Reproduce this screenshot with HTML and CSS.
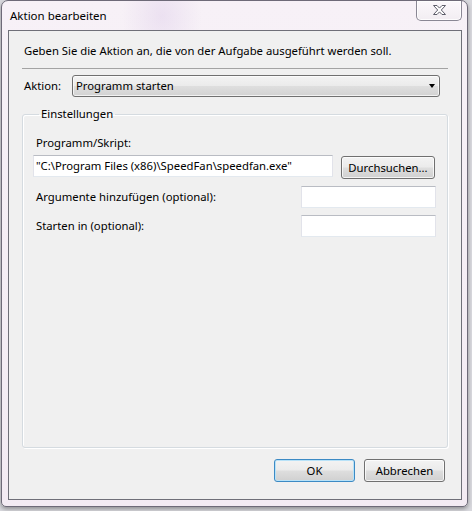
FILE: index.html
```html
<!DOCTYPE html>
<html lang="de">
<head>
<meta charset="utf-8">
<title>Aktion bearbeiten</title>
<link rel="stylesheet" href="styles.css">
</head>
<body>
<div class="window">
  <div class="titlebar">
    <span class="title">Aktion bearbeiten</span>
    <div class="close">
      <svg width="13" height="10" viewBox="-0.5 -0.5 13 10" aria-hidden="true">
        <path d="M0,0 H3.5 L6,2.6 L8.5,0 H12 L7.8,4.5 L12,9 H8.5 L6,6.4 L3.5,9 H0 L4.2,4.5 Z" fill="#ffffff" stroke="#5e5e6a" stroke-width="1" stroke-linejoin="round"/>
      </svg>
    </div>
  </div>
  <div class="client">
    <p class="intro">Geben Sie die Aktion an, die von der Aufgabe ausgeführt werden soll.</p>
    <div class="sep"></div>
    <div class="action-row">
      <span class="action-label">Aktion:</span>
      <div class="combo">
        <span class="combo-text">Programm starten</span>
        <span class="arrow"></span>
      </div>
    </div>
    <fieldset class="group">
      <legend>Einstellungen</legend>
      <div class="field-label">Programm/Skript:</div>
      <div class="prog-row">
        <div class="textbox wide">"C:\Program Files (x86)\SpeedFan\speedfan.exe"</div>
        <div class="btn browse">Durchsuchen...</div>
      </div>
      <div class="opt-row">
        <span class="opt-label">Argumente hinzufügen (optional):</span>
        <div class="textbox small"></div>
      </div>
      <div class="opt-row">
        <span class="opt-label">Starten in (optional):</span>
        <div class="textbox small"></div>
      </div>
    </fieldset>
    <div class="buttons">
      <div class="btn dialog default">OK</div>
      <div class="btn dialog">Abbrechen</div>
    </div>
  </div>
</div>
</body>
</html>
```
FILE: styles.css
```css
* { box-sizing: border-box; }

html, body {
  margin: 0;
  padding: 0;
}

body {
  width: 472px;
  height: 511px;
  overflow: hidden;
  background: #d9d9de;
  font-family: "Noto Sans", "Open Sans", sans-serif;
  font-size: 11.3px;
  line-height: 16px;
  color: #000;
}

.window {
  margin-left: 1px;
  width: 467px;
  height: 507px;
  border: 1px solid #6e6a78;
  border-radius: 7px 7px 5px 5px;
  background:
    radial-gradient(ellipse 40px 50px at 160px 15px, rgba(215, 195, 230, 0.35), rgba(215, 195, 230, 0) 100%),
    linear-gradient(180deg, #f7f1f7 0%, #f3ebf3 100%);
  padding: 0 5px 6px 6px;
  display: flex;
  flex-direction: column;
  box-shadow: 0 2px 4px rgba(0, 0, 0, 0.35);
}

.titlebar {
  height: 29px;
  display: flex;
  align-items: center;
  padding: 1px 0 0 2px;
}

.title {
  font-size: 11.5px;
  color: #000;
}

.close {
  margin-left: auto;
  align-self: flex-start;
  margin-top: -1px;
  width: 46px;
  height: 20px;
  border: 1px solid #8a8794;
  border-top: none;
  border-radius: 0 0 5px 5px;
  background: linear-gradient(180deg, #fbf8fb 0%, #f2edf2 100%);
  box-shadow: inset 0 0 0 1px rgba(255, 255, 255, 0.8);
  display: flex;
  align-items: center;
  justify-content: center;
  padding-bottom: 1px;
}

.close svg { display: block; }

.client {
  width: 454px;
  height: 470px;
  border: 1px solid #6f6f78;
  background: #f0f0f0;
  padding: 0 13px;
  display: flex;
  flex-direction: column;
}

.intro {
  margin: 12px 0 0 0;
  padding-left: 2px;
  height: 16px;
  white-space: nowrap;
}

.sep {
  margin-top: 9px;
  height: 1px;
  background: #a3a3a3;
}

.action-row {
  margin-top: 6px;
  height: 22px;
  display: flex;
  align-items: center;
}

.action-label {
  width: 50px;
  padding-left: 2px;
}

.combo {
  width: 368px;
  height: 22px;
  border: 1px solid #707070;
  border-radius: 3px;
  background: linear-gradient(180deg, #f3f3f3 0%, #ebebeb 48%, #dedede 52%, #d2d2d2 100%);
  box-shadow: inset 0 0 0 1px rgba(255, 255, 255, 0.7);
  display: flex;
  align-items: center;
  padding: 0 4px 0 3px;
}

.combo-text { flex: 1; }

.arrow {
  width: 0;
  height: 0;
  border-left: 3.5px solid transparent;
  border-right: 3.5px solid transparent;
  border-top: 4px solid #000;
}

.group {
  margin: 9px 0 0 0;
  flex: 1;
  border: 1px solid #d5dbe0;
  border-radius: 3px;
  box-shadow: inset 1px 1px 0 #ffffff, 1px 1px 0 #ffffff;
  padding: 0 11px 0 10px;
  min-width: 0;
}

.group legend {
  margin-left: 6px;
  padding: 0 2px;
  line-height: 16px;
}

.field-label {
  margin-top: 13px;
  padding-left: 3px;
  height: 16px;
}

.prog-row {
  margin-top: 4px;
  display: flex;
  align-items: flex-start;
  height: 24px;
}

.textbox {
  height: 22px;
  background: #ffffff;
  border: 1px solid;
  border-color: #b9bcc3 #e2e3ea #e3e9ef #e2e3ea;
  padding: 0 2px;
  display: flex;
  align-items: center;
  white-space: nowrap;
}

.textbox.wide { width: 300px; }
.textbox.small { width: 135px; }

.btn {
  border: 1px solid #707070;
  border-radius: 3px;
  background: linear-gradient(180deg, #f3f3f3 0%, #ebebeb 48%, #dedede 52%, #d0d0d0 100%);
  box-shadow: inset 0 0 0 1px rgba(255, 255, 255, 0.75);
  display: flex;
  align-items: center;
  justify-content: center;
  height: 23px;
}

.browse {
  margin-left: 8px;
  margin-top: 1px;
  width: 94px;
}

.opt-row {
  margin-top: 7px;
  height: 22px;
  display: flex;
  align-items: center;
  justify-content: space-between;
}

.opt-label { padding-left: 3px; }

.buttons {
  margin: 11px 3px 17px 0;
  display: flex;
  justify-content: flex-end;
  gap: 9px;
}

.btn.dialog { width: 81px; }

.btn.default {
  border-color: #3c8ac4;
  box-shadow: inset 0 0 0 1px #b8e2f8;
}
```
